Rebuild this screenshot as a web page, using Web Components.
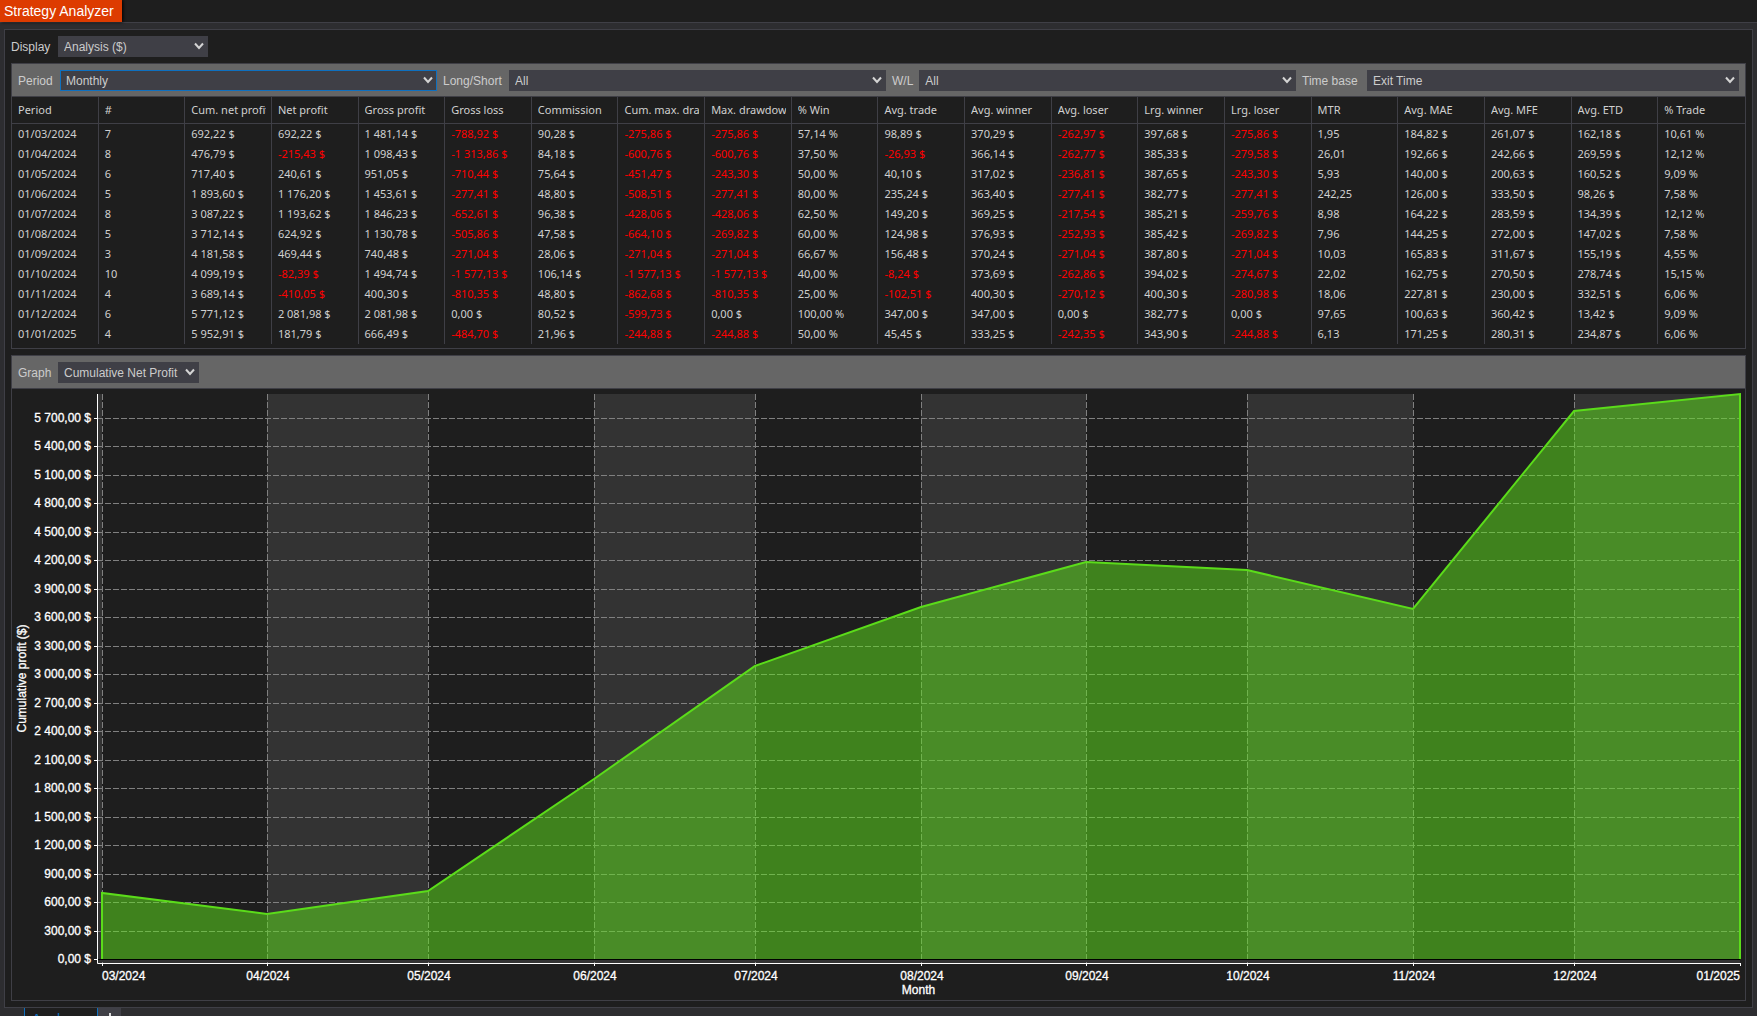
<!DOCTYPE html>
<html lang="en">
<head>
<meta charset="utf-8">
<title>Strategy Analyzer</title>
<style>
html, body { height: 100%; }
body { margin: 0; background: #2d2d30; color: #ccc; font: 12px/16px "Liberation Sans", sans-serif; overflow: hidden; }
</style>
</head>
<body>
<strategy-window></strategy-window>
<script>
class ComboField extends HTMLElement {
  connectedCallback() {
    const root = this.attachShadow({ mode: 'open' });
    const options = this.getAttribute('options').split('|');
    root.innerHTML = `<style>
      :host { display: flex; align-items: center; gap: 6px; min-width: 0; }
      label { white-space: nowrap; min-width: var(--label, 0); }
      .box { position: relative; display: flex; flex: 1; min-width: 0; }
      select { appearance: none; flex: 1; width: 100%; height: 21px; margin: 0; padding: 0 20px 0 5px;
        border: 1px solid #3f3f46; border-radius: 0; outline: 0; background: #3f3f46; color: #ccc;
        font: 12px/16px "Liberation Sans", sans-serif; }
      :host([active]) select { border-color: #0e70c0; }
      svg { position: absolute; right: 4px; top: 6px; width: 10px; height: 8px; pointer-events: none; }
      path { fill: none; stroke: #d4d4d4; stroke-width: 2; }
    </style>
    <label for="s">${this.getAttribute('label')}</label>
    <span class="box"><select id="s">${options.map(o => `<option>${o}</option>`).join('')}</select>
    <svg viewBox="0 0 10 8"><path d="M1 1.5 5 6 9 1.5"/></svg></span>`;
  }
}
customElements.define('combo-field', ComboField);

class ToolStrip extends HTMLElement {
  connectedCallback() {
    this.attachShadow({ mode: 'open' }).innerHTML = `<style>
      :host { display: flex; gap: 6px; align-items: center; padding: 6px 6px 5px; background: #666;
        border-bottom: 1px solid #3f3f46; }
    </style><slot></slot>`;
  }
}
customElements.define('tool-strip', ToolStrip);

const HEAD = ['Period', '#', 'Cum. net profit', 'Net profit', 'Gross profit', 'Gross loss', 'Commission', 'Cum. max. drawdown', 'Max. drawdown', '% Win', 'Avg. trade', 'Avg. winner', 'Avg. loser', 'Lrg. winner', 'Lrg. loser', 'MTR', 'Avg. MAE', 'Avg. MFE', 'Avg. ETD', '% Trade'];
const UNIT = ['', '', '$', '$', '$', '$', '$', '$', '$', '%', '$', '$', '$', '$', '$', '', '$', '$', '$', '%'];
const ROWS = `01/03/2024|7|692,22|692,22|1 481,14|-788,92|90,28|-275,86|-275,86|57,14|98,89|370,29|-262,97|397,68|-275,86|1,95|184,82|261,07|162,18|10,61
01/04/2024|8|476,79|-215,43|1 098,43|-1 313,86|84,18|-600,76|-600,76|37,50|-26,93|366,14|-262,77|385,33|-279,58|26,01|192,66|242,66|269,59|12,12
01/05/2024|6|717,40|240,61|951,05|-710,44|75,64|-451,47|-243,30|50,00|40,10|317,02|-236,81|387,65|-243,30|5,93|140,00|200,63|160,52|9,09
01/06/2024|5|1 893,60|1 176,20|1 453,61|-277,41|48,80|-508,51|-277,41|80,00|235,24|363,40|-277,41|382,77|-277,41|242,25|126,00|333,50|98,26|7,58
01/07/2024|8|3 087,22|1 193,62|1 846,23|-652,61|96,38|-428,06|-428,06|62,50|149,20|369,25|-217,54|385,21|-259,76|8,98|164,22|283,59|134,39|12,12
01/08/2024|5|3 712,14|624,92|1 130,78|-505,86|47,58|-664,10|-269,82|60,00|124,98|376,93|-252,93|385,42|-269,82|7,96|144,25|272,00|147,02|7,58
01/09/2024|3|4 181,58|469,44|740,48|-271,04|28,06|-271,04|-271,04|66,67|156,48|370,24|-271,04|387,80|-271,04|10,03|165,83|311,67|155,19|4,55
01/10/2024|10|4 099,19|-82,39|1 494,74|-1 577,13|106,14|-1 577,13|-1 577,13|40,00|-8,24|373,69|-262,86|394,02|-274,67|22,02|162,75|270,50|278,74|15,15
01/11/2024|4|3 689,14|-410,05|400,30|-810,35|48,80|-862,68|-810,35|25,00|-102,51|400,30|-270,12|400,30|-280,98|18,06|227,81|230,00|332,51|6,06
01/12/2024|6|5 771,12|2 081,98|2 081,98|0,00|80,52|-599,73|0,00|100,00|347,00|347,00|0,00|382,77|0,00|97,65|100,63|360,42|13,42|9,09
01/01/2025|4|5 952,91|181,79|666,49|-484,70|21,96|-244,88|-244,88|50,00|45,45|333,25|-242,35|343,90|-244,88|6,13|171,25|280,31|234,87|6,06`.split('\n').map(r => r.split('|'));

class PeriodTable extends HTMLElement {
  connectedCallback() {
    const cell = (v, i) => `<td${v[0] === '-' ? ' class="neg"' : ''}>${v}${UNIT[i] ? ' ' + UNIT[i] : ''}</td>`;
    this.attachShadow({ mode: 'open' }).innerHTML = `<style>
      :host { display: block; padding-bottom: 4px; }
      table { width: 100%; border-collapse: separate; border-spacing: 0; table-layout: fixed;
        font: 11px/20px "Noto Sans", sans-serif; color: #d0d0d0; }
      th, td { padding: 0 5px 0 6px; text-align: left; font-weight: 400; white-space: nowrap;
        border-right: 1px solid #3f3f46; }
      th:last-child, td:last-child { border-right: 0; }
      th { height: 26px; border-bottom: 1px solid #3f3f46; }
      th span { display: block; overflow: hidden; }
      td { height: 20px; }
      .neg { color: #f00; }
    </style>
    <table><thead><tr>${HEAD.map(h => `<th scope="col"><span>${h}</span></th>`).join('')}</tr></thead>
    <tbody>${ROWS.map(r => `<tr>${r.map(cell).join('')}</tr>`).join('')}</tbody></table>`;
  }
}
customElements.define('period-table', PeriodTable);

class ProfitChart extends HTMLElement {
  connectedCallback() {
    this.attachShadow({ mode: 'open' }).innerHTML = `<style>
      :host { display: block; flex: 1; min-height: 0; overflow: hidden; }
      svg { display: block; width: 100%; height: 100%; }
      text { font: 12px "Liberation Sans", sans-serif; fill: #fff; stroke: #fff; stroke-width: .3px; }
      .grid { fill: none; stroke: #808080; stroke-dasharray: 6 2; }
      .axis { fill: none; stroke: #fff; }
    </style><svg role="img" aria-label="Cumulative net profit by month"></svg>`;
    new ResizeObserver(() => this.draw()).observe(this);
    this.draw();
  }
  draw() {
    const W = this.clientWidth, H = this.clientHeight;
    if (!W || !H) return;
    const pts = ROWS.map(r => {
      const [d, m, y] = r[0].split('/').map(Number);
      return { t: Date.UTC(y, m - 1, d), v: parseFloat(r[2].replace(' ', '').replace(',', '.')), label: r[0].slice(3) };
    });
    const L = 90, R = W - 5, T = 5, B = H - 41, AX = 85, AY = B + 4;
    const t0 = pts[0].t, t1 = pts[10].t, top = pts[10].v;
    const x = t => Math.floor(L + (t - t0) / (t1 - t0) * (R - L));
    const y = v => Math.round(B - v / top * (B - T));
    let o = `<rect x="${AX}" y="${T}" width="${L - AX}" height="${AY - T}" fill="#333"/>`;
    for (let i = 1; i < 10; i += 2)
      o += `<rect x="${x(pts[i].t)}" y="${T}" width="${x(pts[i + 1].t) - x(pts[i].t)}" height="${B - T}" fill="#333"/>`;
    o += `<rect x="${AX}" y="${B}" width="${R - AX}" height="4" fill="#333"/>`;
    for (let v = 0; v <= top; v += 300) {
      const yy = y(v) + .5;
      if (v) o += `<path class="grid" d="M${AX} ${yy}H${R}"/>`;
      o += `<path class="axis" d="M${AX - 3} ${yy}h4"/>`;
      const s = v >= 1000 ? Math.floor(v / 1000) + ' ' + String(v % 1000).padStart(3, '0') : v;
      o += `<text x="${AX - 6}" y="${y(v) + 4}" text-anchor="end">${s},00 $</text>`;
    }
    pts.slice(0, 10).forEach(p => { o += `<path class="grid" d="M${x(p.t) + .5} ${T}V${AY}"/>`; });
    const line = pts.map(p => `${x(p.t)},${y(p.v)}`).join(' ');
    o += `<path d="M${AX + 1} ${B + .5}H${R}" stroke="#000"/>
      <polygon points="${L},${B} ${line} ${R},${B}" fill="#5fe61b" fill-opacity=".5"/>
      <polyline points="${L},${B} ${line} ${R},${B}" fill="none" stroke="#5bdc1a" stroke-width="2"/>
      <path class="axis" d="M${AX + .5} ${T}V${AY + .5}H${R + 1}"/>`;
    pts.forEach((p, i) => {
      const a = i === 0 ? 'start' : i === 10 ? 'end' : 'middle';
      o += `<path class="axis" d="M${x(p.t) + .5} ${AY}v3"/><text x="${x(p.t) + (i % 10 ? 1 : 0)}" y="${AY + 17}" text-anchor="${a}">${p.label}</text>`;
    });
    o += `<text x="${(AX + R) / 2}" y="${AY + 31}" text-anchor="middle">Month</text>
      <text transform="translate(14 ${(T + B) / 2 + 2}) rotate(-90)" text-anchor="middle">Cumulative profit ($)</text>`;
    this.shadowRoot.querySelector('svg').innerHTML = o;
  }
}
customElements.define('profit-chart', ProfitChart);

class SheetTabs extends HTMLElement {
  connectedCallback() {
    this.attachShadow({ mode: 'open' }).innerHTML = `<style>
      :host { display: flex; height: 8px; padding-left: 24px; overflow: hidden; align-items: flex-start; }
      button { margin: 0; border: 0; border-radius: 0; font: 14px/16px "Liberation Sans", sans-serif; }
      .tab { width: 74px; padding: 3px 0 4px 7px; text-align: left; background: #1e1e1e; color: #0e70c0;
        border: solid #0e70c0; border-width: 0 1px; }
      .add { width: 23px; padding: 5px 0; background: #3f3f46; }
      svg { display: block; margin: 0 auto; }
    </style>
    <button class="tab">Analyzer</button>
    <button class="add" aria-label="Add tab"><svg width="10" height="10"><path d="M5 0V10M0 5H10" stroke="#ddd" stroke-width="2"/></svg></button>`;
  }
}
customElements.define('sheet-tabs', SheetTabs);

class StrategyWindow extends HTMLElement {
  connectedCallback() {
    this.attachShadow({ mode: 'open' }).innerHTML = `<style>
      :host { display: flex; flex-direction: column; height: 100vh; }
      header { display: flex; height: 22px; background: #1e1e1e; border-bottom: 1px solid #3f3f46; }
      h1 { margin: 0; padding: 0 8px 0 4px; background: #dd3b00; color: #fff; font: 14px/22px "Liberation Sans", sans-serif;
        box-shadow: 1px 0 3px #000; }
      main { flex: 1; min-height: 0; display: flex; flex-direction: column; margin: 6px 4px 0; padding: 6px;
        background: #1e1e1e; border: 1px solid #3f3f46; }
      .display { --label: 41px; width: 197px; margin-bottom: 6px; }
      .panel { border: 1px solid #3f3f46; }
      .grow { flex: 1; min-height: 0; display: flex; flex-direction: column; margin-top: 6px; }
      .period { --label: 36px; flex: 1 1 42px; }
      .side { --label: 60px; flex: 1 1 66px; }
      .wl { --label: 21px; flex: 1 1 27px; }
      .base { --label: 59px; flex: 1 1 60px; }
      .graph { --label: 34px; width: 181px; }
    </style>
    <header><h1>Strategy Analyzer</h1></header>
    <main>
      <combo-field class="display" label="Display" options="Analysis ($)"></combo-field>
      <section class="panel">
        <tool-strip>
          <combo-field class="period" active label="Period" options="Monthly"></combo-field>
          <combo-field class="side" label="Long/Short" options="All"></combo-field>
          <combo-field class="wl" label="W/L" options="All"></combo-field>
          <combo-field class="base" label="Time base" options="Exit Time"></combo-field>
        </tool-strip>
        <period-table></period-table>
      </section>
      <section class="panel grow">
        <tool-strip><combo-field class="graph" label="Graph" options="Cumulative Net Profit"></combo-field></tool-strip>
        <profit-chart></profit-chart>
      </section>
    </main>
    <sheet-tabs></sheet-tabs>`;
  }
}
customElements.define('strategy-window', StrategyWindow);
</script>
</body>
</html>
